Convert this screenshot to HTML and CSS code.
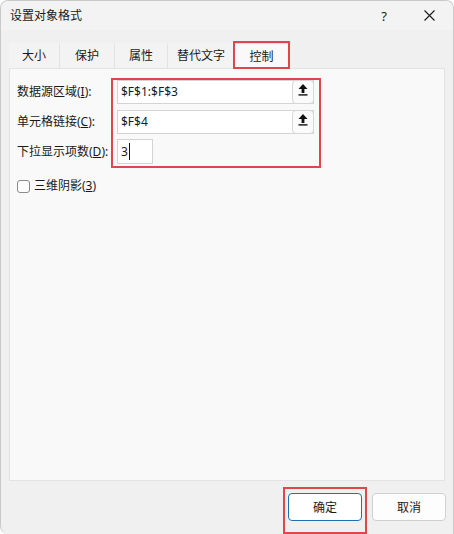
FILE: index.html
```html
<!DOCTYPE html>
<html lang="zh-CN">
<head>
<meta charset="utf-8">
<title>设置对象格式</title>
<link rel="stylesheet" href="styles.css">
</head>
<body>
<div class="window">
  <div class="titlebar">
    <span class="title">设置对象格式</span>
    <span class="help">?</span>
    <span class="close">
      <svg width="11" height="11" viewBox="0 0 11 11"><path d="M0.5 0.5 L10.5 10.5 M10.5 0.5 L0.5 10.5" stroke="#1a1a1a" stroke-width="1.1" fill="none"/></svg>
    </span>
  </div>
  <div class="tabs">
    <div class="tab t1">大小</div>
    <div class="tab t2">保护</div>
    <div class="tab t3">属性</div>
    <div class="tab t4">替代文字</div>
    <div class="tab t5 active">控制</div>
  </div>
  <div class="panel">
    <div class="form">
      <div class="labels">
        <div class="label r1">数据源区域(<u>I</u>):</div>
        <div class="label r2">单元格链接(<u>C</u>):</div>
        <div class="label r3">下拉显示项数(<u>D</u>):</div>
      </div>
      <div class="fields">
        <div class="input wide r1">
          <span class="value">$F$1:$F$3</span>
          <span class="pick"><svg width="10" height="12" viewBox="0 0 10 12"><polygon points="5,0 0.5,5 9.5,5" fill="#111"/><rect x="3.6" y="4.5" width="2.8" height="4.5" fill="#111"/><rect x="0.5" y="10.2" width="9" height="1.4" fill="#111"/></svg></span>
        </div>
        <div class="input wide r2">
          <span class="value">$F$4</span>
          <span class="pick"><svg width="10" height="12" viewBox="0 0 10 12"><polygon points="5,0 0.5,5 9.5,5" fill="#111"/><rect x="3.6" y="4.5" width="2.8" height="4.5" fill="#111"/><rect x="0.5" y="10.2" width="9" height="1.4" fill="#111"/></svg></span>
        </div>
        <div class="input small r3">
          <span class="value">3</span><span class="caret"></span>
        </div>
      </div>
    </div>
    <div class="check">
      <span class="box"></span>
      <span class="check-label">三维阴影(<u>3</u>)</span>
    </div>
  </div>
  <div class="footer">
    <button class="btn primary">确定</button>
    <button class="btn">取消</button>
  </div>
</div>
</body>
</html>
```
FILE: styles.css
```css
* { box-sizing: border-box; }
html, body { margin: 0; padding: 0; background: #ffffff; }
body {
  font-family: "Noto Sans", "Noto Sans CJK SC", sans-serif;
  font-size: 12px;
  color: #1a1a1a;
}
.window {
  width: 454px;
  height: 534px;
  border: 1px solid #c9c9c9;
  border-bottom: none;
  border-radius: 8px 8px 0 8px;
  background: #f0f0f0;
  display: flex;
  flex-direction: column;
  overflow: hidden;
}
.titlebar {
  height: 29px;
  display: flex;
  align-items: center;
  padding-left: 9px;
  background: #f3f3f3;
}
.title { flex: 1; font-size: 12px; line-height: 16px; }
.help { width: 12px; text-align: center; margin-right: 34px; font-size: 13px; line-height: 16px; }
.close { width: 11px; height: 11px; margin-right: 18px; display: flex; }
.tabs {
  display: flex;
  margin-top: 13px;
  padding-left: 8px;
  height: 25px;
}
.tab {
  height: 25px;
  display: flex;
  align-items: center;
  justify-content: center;
  line-height: 16px;
  background: #f3f3f3;
  border-right: 1px solid #e3e3e3;
  border-top: 1px solid #f3f3f3;
}
.t1 { width: 51px; }
.t2 { width: 55px; }
.t3 { width: 53px; }
.t4 { width: 66px; border-right: none; }
.t5 { width: 55px; }
.tab.active {
  position: relative;
  background: #f9f9f9;
  border: 1px solid #e0e0e0;
  border-bottom: none;
  height: 26px;
  margin-bottom: -1px;
  z-index: 1;
}
.tab.active::after {
  content: "";
  position: absolute;
  left: -2px;
  right: -2px;
  top: -3px;
  bottom: 0;
  border: 2px solid #e0474c;
}
.panel {
  margin: 0 8px;
  height: 413px;
  background: #f9f9f9;
  border: 1px solid #e3e3e3;
  padding: 9px 0 0 7px;
}
.form { display: flex; }
.labels {
  width: 94px;
  padding-top: 2px;
  display: flex;
  flex-direction: column;
}
.label {
  display: flex;
  align-items: center;
  line-height: 16px;
  white-space: nowrap;
}
.r1 { height: 24px; }
.r2 { height: 24px; margin-top: 6px; }
.r3 { height: 25px; margin-top: 5px; }
.fields {
  border: 2px solid #e0474c;
  padding: 0 5px 2px 4px;
  display: flex;
  flex-direction: column;
}
.input {
  background: #ffffff;
  border: 1px solid #d4d4d4;
  display: flex;
  align-items: center;
  padding-left: 3px;
}
.wide { width: 197px; }
.small { width: 36px; }
.value { line-height: 16px; }
.input .value { flex: none; }
.wide .value { flex: 1; }
.pick {
  width: 22px;
  height: 24px;
  margin: -1px -1px -1px 0;
  border: 1px solid #d6d6d6;
  border-radius: 4px;
  background: #fbfbfb;
  display: flex;
  align-items: flex-start;
  justify-content: center;
  padding-top: 3px;
}
.caret {
  width: 1px;
  height: 17px;
  background: #111;
  margin-left: 1px;
}
.check {
  display: flex;
  align-items: center;
  margin-top: 11px;
  height: 14px;
}
.box {
  width: 13px;
  height: 13px;
  border: 1px solid #8a8a8a;
  border-radius: 3px;
  background: #fdfdfd;
  margin-right: 4px;
}
.check-label { line-height: 16px; }
.footer {
  flex: 1;
  display: flex;
  justify-content: flex-end;
  align-items: flex-start;
  padding: 12px 7px 0 0;
  gap: 10px;
}
.btn {
  width: 74px;
  height: 28px;
  border: 1px solid #d0d0d0;
  border-radius: 4px;
  background: #fdfdfd;
  font-family: "Noto Sans", "Noto Sans CJK SC", sans-serif;
  font-size: 12px;
  color: #1a1a1a;
  padding: 0;
}
.btn.primary {
  position: relative;
  border-color: #1f6fb8;
  background: #ffffff;
}
.btn.primary::after {
  content: "";
  position: absolute;
  left: -6px;
  right: -6px;
  top: -7px;
  bottom: -14px;
  border: 2px solid #e0474c;
}
```
